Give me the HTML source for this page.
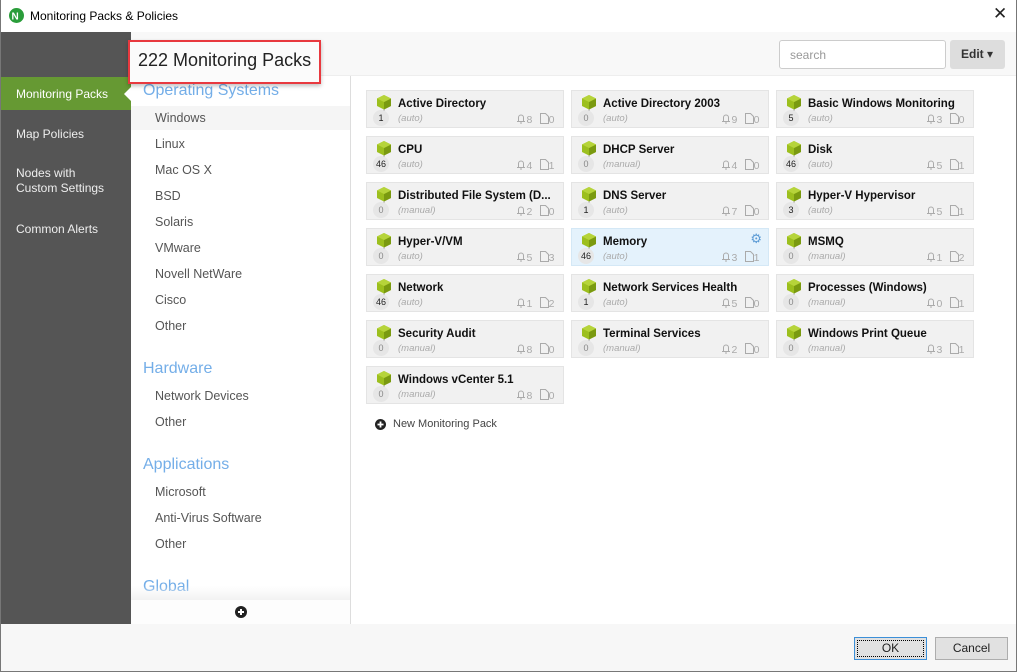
<!DOCTYPE html>
<html><head><meta charset="utf-8"><style>
*{box-sizing:border-box;margin:0;padding:0}
body{width:1017px;height:672px;overflow:hidden;background:#fff;font-family:"Liberation Sans","DejaVu Sans",sans-serif;position:relative}
.abs{position:absolute}
.win{position:absolute;left:0;top:0;width:1017px;height:672px;border:1px solid #777;border-top:none;z-index:20}
.title{left:0;top:0;width:1017px;height:32px;background:#fff;font-size:12px;color:#000}
.side{left:1px;top:32px;width:130px;height:592px;background:#555}
.side div{position:absolute;left:15px;color:#eee;font-size:12px;line-height:15px}
.act{left:1px;top:77px;width:130px;height:33px;background:#669933}
.hdr{left:131px;top:32px;width:885px;height:44px;background:#f8f8f8;border-bottom:1px solid #eee}
.cats{left:131px;top:76px;width:220px;height:548px;background:#fff;border-right:1px solid #ddd}
.cat{position:absolute;left:12px;font-size:16px;color:#74aee8}
.it{position:absolute;left:24px;font-size:12.5px;color:#555}
.card{position:absolute;width:198px;height:38px;background:#f1f1f1;border:1px solid #e4e4e4}
.card.sel{background:#e4f2fc;border-color:#d4e8f6}
.card b{position:absolute;left:31px;top:7px;font-size:11.5px;color:#111}
.card i{position:absolute;left:31px;top:22px;font-size:9.5px;color:#aaa}
.card .n{position:absolute;left:6px;top:19px;width:16px;height:16px;border-radius:50%;background:#e6e6e6;font-size:9px;color:#888;text-align:center;line-height:16px}
.card .n.d{color:#222}
.card .cube{position:absolute;left:10px;top:4px}
.card .st{position:absolute;right:8px;top:22px;font-size:10.5px;color:#aaa;letter-spacing:.5px}
.foot{left:1px;top:624px;width:1015px;height:47px;background:#f7f7f7}
.btn{position:absolute;top:637px;width:73px;height:23px;background:#e1e1e1;border:1px solid #adadad;font-size:12px;text-align:center;line-height:21px;color:#222}
</style></head><body>
<div class="abs title">
<svg class="abs" style="left:9px;top:8px" width="15" height="15"><circle cx="7.5" cy="7.5" r="7.5" fill="#2a9d3a"/><text x="2.5" y="11.5" font-size="10" font-weight="bold" fill="#fff" font-family="Liberation Sans">N</text></svg>
<span class="abs" style="left:30px;top:9px">Monitoring Packs &amp; Policies</span>
<span class="abs" style="left:993px;top:4px;font-size:17px;color:#222">✕</span>
</div>
<div class="abs side">
<div style="top:95px">Map Policies</div>
<div style="top:134px">Nodes with<br>Custom Settings</div>
<div style="top:190px">Common Alerts</div>
</div>
<div class="abs act"><span class="abs" style="left:15px;top:10px;color:#fff;font-size:12px">Monitoring Packs</span></div>
<div class="abs" style="left:124px;top:87px;width:0;height:0;border-top:7px solid transparent;border-bottom:7px solid transparent;border-right:7px solid #fff"></div>
<div class="abs hdr"></div>
<div class="abs" style="left:779px;top:40px;width:167px;height:29px;border:1px solid #ccc;border-radius:3px;background:#fff"><span class="abs" style="left:10px;top:7px;font-size:12px;color:#999">search</span></div>
<div class="abs" style="left:950px;top:40px;width:55px;height:29px;border-radius:3px;background:#ddd"><span class="abs" style="left:11px;top:7px;font-size:12px;font-weight:bold;color:#333">Edit ▾</span></div>
<div class="abs cats">
<div class="abs" style="left:0;top:30px;width:219px;height:24px;background:#f5f5f5"></div>
<div class="cat" style="top:6px">Operating Systems</div>
<div class="it" style="top:35px">Windows</div>
<div class="it" style="top:61px">Linux</div>
<div class="it" style="top:87px">Mac OS X</div>
<div class="it" style="top:113px">BSD</div>
<div class="it" style="top:139px">Solaris</div>
<div class="it" style="top:165px">VMware</div>
<div class="it" style="top:191px">Novell NetWare</div>
<div class="it" style="top:217px">Cisco</div>
<div class="it" style="top:243px">Other</div>
<div class="cat" style="top:284px">Hardware</div>
<div class="it" style="top:313px">Network Devices</div>
<div class="it" style="top:339px">Other</div>
<div class="cat" style="top:380px">Applications</div>
<div class="it" style="top:409px">Microsoft</div>
<div class="it" style="top:435px">Anti-Virus Software</div>
<div class="it" style="top:461px">Other</div>
<div class="cat" style="top:502px">Global</div>
<div class="abs" style="left:0;top:510px;width:219px;height:14px;background:linear-gradient(rgba(255,255,255,0),#f2f2f2)"></div>
<div class="abs" style="left:0;top:524px;width:219px;height:24px;background:#fdfdfd"></div>
<svg class="abs" style="left:104px;top:530px" width="12" height="12"><circle cx="6" cy="6" r="6" fill="#222"/><path d="M6 3v6M3 6h6" stroke="#fff" stroke-width="2"/></svg>
</div>
<div class="abs" style="left:128px;top:40px;width:193px;height:44px;border:2px solid #e8393f;background:#fbfbfb;box-shadow:0 2px 4px rgba(0,0,0,.25);z-index:10"><span class="abs" style="left:8px;top:8px;font-size:18px;color:#222">222 Monitoring Packs</span></div>
<div id="cards"></div>
<svg class="abs" style="left:375px;top:419px" width="11" height="11"><circle cx="5.5" cy="5.5" r="5.5" fill="#222"/><path d="M5.5 2.5v6M2.5 5.5h6" stroke="#fff" stroke-width="1.8"/></svg>
<span class="abs" style="left:393px;top:418px;font-size:11px;color:#444">New Monitoring Pack</span>
<div class="abs foot"></div>
<div class="btn" style="left:854px;border-color:#3c8fd8;outline:1px dotted #000;outline-offset:-4px">OK</div>
<div class="btn" style="left:935px">Cancel</div>
<div class="win"></div>
<script>
var d=[["Active Directory","auto",1,8,0],["Active Directory 2003","auto",0,9,0],["Basic Windows Monitoring","auto",5,3,0],
["CPU","auto",46,4,1],["DHCP Server","manual",0,4,0],["Disk","auto",46,5,1],
["Distributed File System (D...","manual",0,2,0],["DNS Server","auto",1,7,0],["Hyper-V Hypervisor","auto",3,5,1],
["Hyper-V/VM","auto",0,5,3],["Memory","auto",46,3,1],["MSMQ","manual",0,1,2],
["Network","auto",46,1,2],["Network Services Health","auto",1,5,0],["Processes (Windows)","manual",0,0,1],
["Security Audit","manual",0,8,0],["Terminal Services","manual",0,2,0],["Windows Print Queue","manual",0,3,1],
["Windows vCenter 5.1","manual",0,8,0]];
var cube='<svg class="cube" width="14" height="17" viewBox="0 0 14 17"><path d="M7 0L14 3.5V11L7 14.5L0 11V3.5Z" fill="#9cbf1e"/><path d="M7 7L14 3.5V11L7 14.5Z" fill="#7a9a10"/><path d="M0 3.5L7 0L14 3.5L7 7Z" fill="#b6d43a"/><path d="M7 14.5V17" stroke="#999" stroke-width="1"/></svg>';
var bell='<svg width="10" height="11" style="vertical-align:-1px"><path d="M1 8.5h8M2.5 8.5V4.5a2.5 2.5 0 0 1 5 0V8.5M4 10h2" stroke="#aaa" fill="none"/></svg>';
var doc='<svg width="9" height="11" style="vertical-align:-1px"><path d="M0.5 0.5h5l3 3v7h-8z" stroke="#aaa" fill="none"/></svg>';
var h='';
d.forEach(function(c,i){var x=366+205*(i%3),y=90+46*Math.floor(i/3);
h+='<div class="card'+(i==10?' sel':'')+'" style="left:'+x+'px;top:'+y+'px">'+cube+'<b>'+c[0]+'</b><span class="n'+(c[2]?' d':'')+'">'+c[2]+'</span><i>('+c[1]+')</i><span class="st">'+bell+c[3]+' &nbsp;'+doc+c[4]+'</span>'+(i==10?'<span style="position:absolute;right:6px;top:2px;color:#5b9bd5;font-size:13px">⚙</span>':'')+'</div>';});
document.getElementById('cards').innerHTML=h;
</script>
</body></html>
